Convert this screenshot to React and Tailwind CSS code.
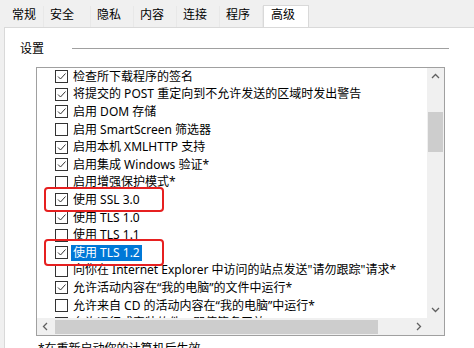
import React from "react";

const rows = [
  [true, "检查所下载程序的签名"],
  [true, "将提交的 POST 重定向到不允许发送的区域时发出警告"],
  [true, "启用 DOM 存储"],
  [false, "启用 SmartScreen 筛选器"],
  [true, "启用本机 XMLHTTP 支持"],
  [true, "启用集成 Windows 验证*"],
  [false, "启用增强保护模式*"],
  [true, "使用 SSL 3.0"],
  [true, "使用 TLS 1.0"],
  [false, "使用 TLS 1.1"],
  [true, "使用 TLS 1.2", true],
  [false, "向你在 Internet Explorer 中访问的站点发送\"请勿跟踪\"请求*"],
  [true, "允许活动内容在“我的电脑”的文件中运行*"],
  [false, "允许来自 CD 的活动内容在“我的电脑”中运行*"],
  [false, "允许运行或安装软件，即使签名无效"],
];

function Box({ checked }) {
  return (
    <div className="w-[13px] h-[13px] border border-[#333333] bg-white shrink-0 relative">
      {checked && (
        <svg width="11" height="11" viewBox="0 0 11 11" className="absolute left-0 top-0">
          <path d="M2 5.5 L4.5 8 L9.5 2.5" fill="none" stroke="#333333" strokeWidth="1" />
        </svg>
      )}
    </div>
  );
}

function Chevron({ dir }) {
  const d = {
    up: "M1 5 L4.5 1.5 L8 5",
    down: "M1 2 L4.5 5.5 L8 2",
    left: "M5 1 L1.5 4.5 L5 8",
    right: "M2 1 L5.5 4.5 L2 8",
  }[dir];
  const w = dir === "up" || dir === "down" ? 9 : 7;
  const h = dir === "up" || dir === "down" ? 7 : 9;
  return (
    <svg width={w} height={h} viewBox={`0 0 ${w} ${h}`}>
      <path d={d} fill="none" stroke="#606060" strokeWidth="1.3" />
    </svg>
  );
}

const tabs = [
  ["常规", "w-[38px] pl-[6px]"],
  ["安全", "w-[47px] pl-[6px]"],
  ["隐私", "w-[43px] pl-[6px]"],
  ["内容", "w-[43px] pl-[6px]"],
  ["连接", "w-[43px] pl-[6px]"],
  ["程序", "w-[43px] pl-[6px]"],
];

export default function App() {
  return (
    <div
      className="w-[474px] h-[348px] bg-[#f0f0f0] overflow-hidden relative text-[12px] text-black"
      style={{ fontFamily: '"Noto Sans", "Noto Sans CJK SC", sans-serif' }}
    >
      {/* tabs */}
      <div className="h-[27px] flex items-end pl-[6px]">
        {tabs.map(([t, c]) => (
          <div
            key={t}
            className={`${c} h-[21px] flex items-center border-r border-[#e8e8e8] bg-[#f0f0f0] leading-none`}
          >
            <span className="-mt-[4px]">{t}</span>
          </div>
        ))}
        <div className="w-[46px] h-[23px] pl-[7px] flex items-center bg-white border border-b-0 border-[#d9d9d9] leading-none relative top-[1px]">
          <span className="-mt-[5px]">高级</span>
        </div>
      </div>

      {/* panel */}
      <div className="ml-[4px] h-[330px] bg-white border-l border-t border-[#d9d9d9] relative">
        <div className="flex items-center pl-[15px] pt-[12px] h-[29px]">
          <span className="leading-none">设置</span>
          <div className="ml-[28px] w-[377px] h-px bg-[#a0a0a0]" />
        </div>

        <div className="ml-[31px] mt-[10px] w-[409px] h-[269px] border border-[#a0a0a0] flex flex-col">
          <div className="flex h-[250px]">
            <div className="flex-1 overflow-hidden relative">
              {rows.map(([checked, text, sel], i) => (
                <div key={i} className="h-[17.6px] flex items-center pl-[18px] whitespace-nowrap">
                  <Box checked={checked} />
                  <span
                    className={`ml-[3px] px-[2px] leading-[16px] ${
                      sel ? "bg-[#0078d7] text-white" : ""
                    }`}
                  >
                    {text}
                  </span>
                </div>
              ))}
            </div>
            <div className="w-[17px] bg-[#f0f0f0] flex flex-col items-center">
              <div className="h-[17px] flex items-center justify-center">
                <Chevron dir="up" />
              </div>
              <div className="mt-[27px] w-[15px] h-[40px] bg-[#cdcdcd]" />
              <div className="flex-1" />
              <div className="h-[17px] flex items-center justify-center">
                <Chevron dir="down" />
              </div>
            </div>
          </div>
          <div className="h-[17px] flex bg-[#f0f0f0]">
            <div className="w-[17px] flex items-center justify-center">
              <Chevron dir="left" />
            </div>
            <div className="flex-1 flex items-center">
              <div className="ml-[1px] w-[323px] h-[14px] bg-[#cdcdcd]" />
            </div>
            <div className="w-[17px] flex items-center justify-center">
              <Chevron dir="right" />
            </div>
            <div className="w-[17px] bg-[#f0f0f0]" />
          </div>
        </div>

        <div className="ml-[33px] mt-[5px] leading-[16px]">*在重新启动你的计算机后生效</div>
      </div>

      {/* red annotation boxes */}
      <div className="absolute left-[44px] top-[187px] w-[120px] h-[25px] border-[2.5px] border-[#e62020] rounded-[4px]" />
      <div className="absolute left-[44px] top-[239px] w-[120px] h-[27px] border-[2.5px] border-[#e62020] rounded-[4px]" />
    </div>
  );
}
